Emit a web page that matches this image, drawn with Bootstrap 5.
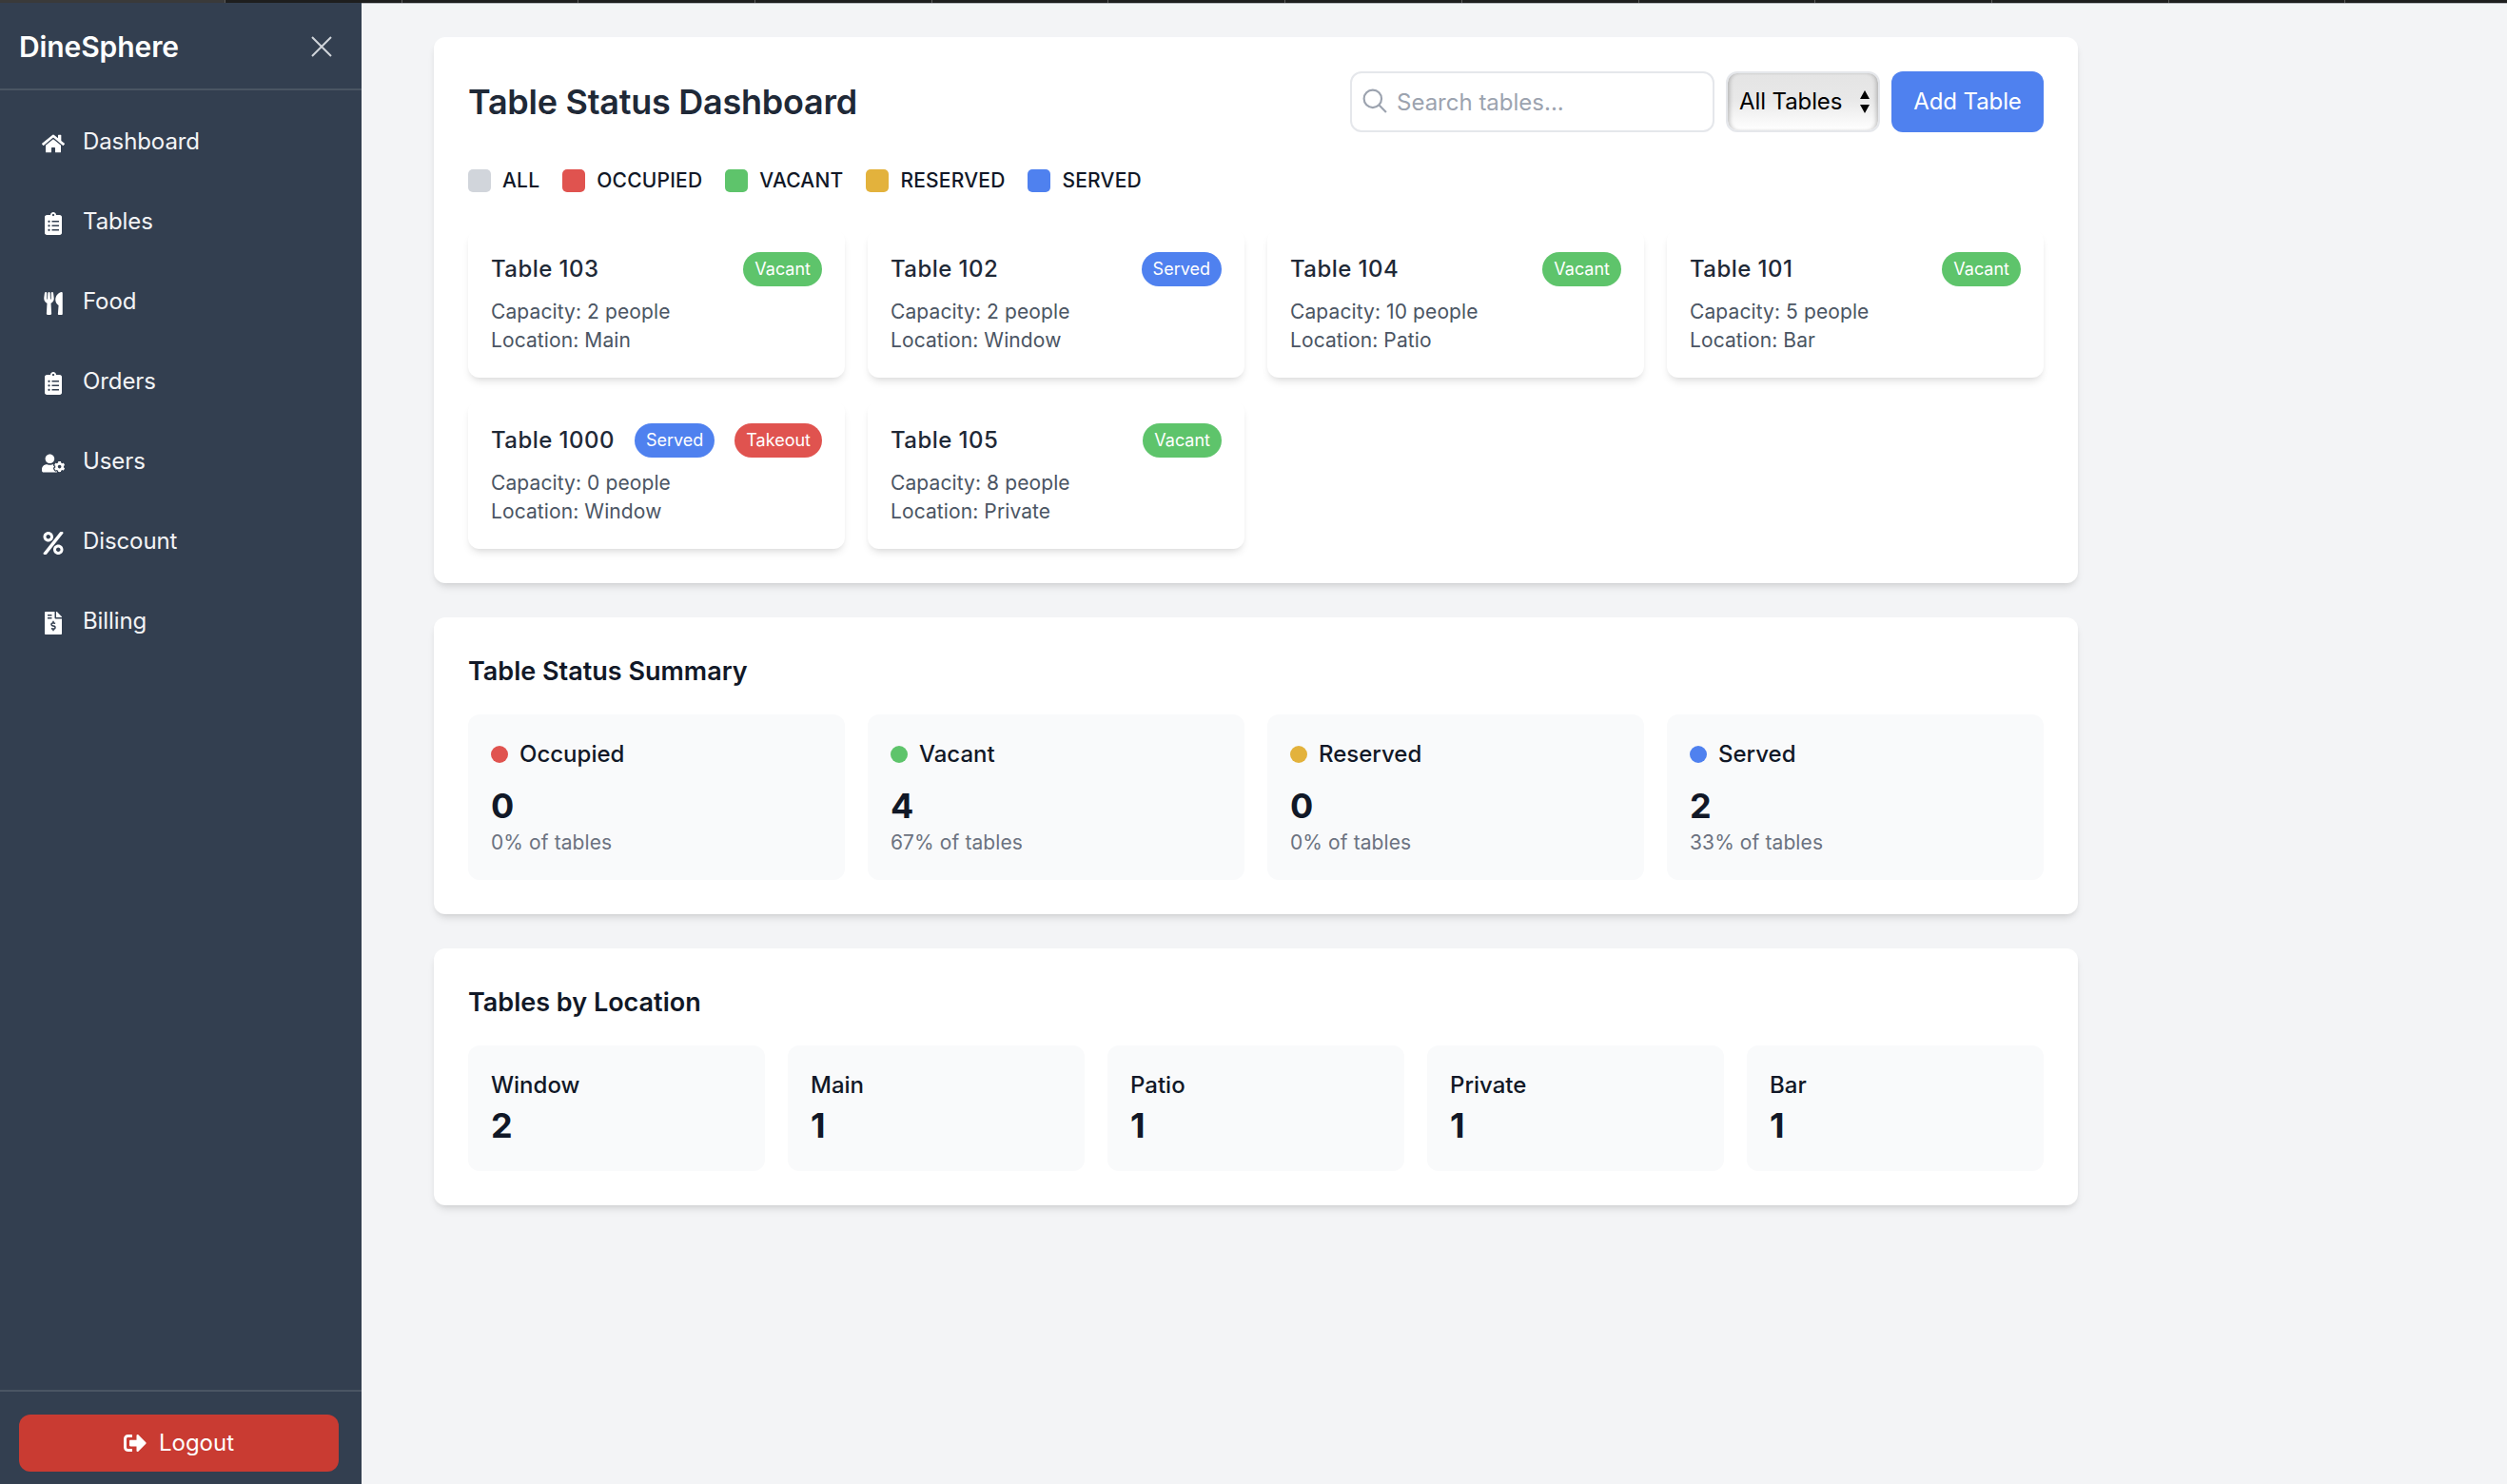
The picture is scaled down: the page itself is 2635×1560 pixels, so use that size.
<!DOCTYPE html>
<html lang="en">
<head>
    <meta charset="UTF-8">
    <title>DineSphere</title>
    <link href="https://cdn.jsdelivr.net/npm/bootstrap@5.3.0/dist/css/bootstrap.min.css" rel="stylesheet">
    <style>
        html, body { height: 100%; }
        body {
            font-family: Inter, "Liberation Sans", sans-serif;
            background: #f3f4f6;
            color: #1f2937;
            overflow: hidden;
        }
        .top-strip { height: 3px; background: #1e1e1e; overflow: hidden; }
        .top-strip span { width: 185.7px; flex: none; border-left: 1px solid #5a5a5a; }
        .top-strip span:first-child { width: 236px; background: #3a3a3a; border: 0; }
        .shell { height: 1557px; }

        .side-bar { width: 380px; background: #333f50; color: #fff; padding-top: 1px; }
        .side-head { height: 91px; padding: 0 31px 0 20px; border-bottom: 2px solid #4a5563; }
        .side-brand { font-size: 30px; font-weight: 600; line-height: 1; letter-spacing: -.1px; }
        .side-close { width: 22px; height: 22px; stroke: #d1d5db; stroke-width: 2; fill: none; }
        .side-menu { padding-top: 12px; }
        .side-link { height: 84px; padding-left: 44px; gap: 19px; color: #f3f4f6; font-size: 24px; letter-spacing: -.1px; text-decoration: none; }
        .side-link svg { width: 24px; height: 24px; fill: #fff; margin-top: 3px; flex: none; }
        .side-foot { border-top: 2px solid #4a5563; padding: 24px 24px 13px 20px; }
        .logout-btn { height: 60px; background: #c93b32; border: 0; color: #fff; font-size: 24px; gap: 13px; border-radius: 12px; }
        .logout-btn:hover { background: #c93b32; color: #fff; }
        .logout-btn svg { width: 24px; height: 24px; fill: #fff; }

        .main-area { padding: 35px 451px 0 76px; gap: 36px; border-top: 1px solid #b8bbc0; }
        .panel { background: #fff; border-radius: 12px; padding: 36px; box-shadow: 0 6px 9px -2px rgba(0,0,0,.1), 0 3px 6px -3px rgba(0,0,0,.1); }
        .panel-title { font-size: 36px; font-weight: 600; line-height: 54px; letter-spacing: -.25px; color: #1f2937; margin: 0; }
        .panel-sub { font-size: 27px; font-weight: 600; line-height: 42px; color: #111827; margin: 0 0 24px; }

        .ctrl-group { column-gap: 12px; }
        .search-box { width: 383px; height: 64px; }
        .search-box svg { left: 13px; top: 18px; width: 26px; height: 26px; stroke: #9ca3af; stroke-width: 2; fill: none; }
        .search-box input { height: 64px; border: 2px solid #e5e7eb; border-radius: 12px; padding: 0 12px 0 47px; font-size: 24px; }
        .search-box input::placeholder { color: #9ca3af; }
        .pick-box { width: 162px; height: 64px; }
        .pick-box select {
            appearance: none; width: 100%; height: 64px; padding: 0 0 0 12px; font-size: 24px; letter-spacing: -.1px; color: #000;
            border: 2px solid #e5e7eb; border-radius: 12px;
            background: linear-gradient(#e4e4e4 0%, #e8e8e8 45%, #ffffff 100%);
            box-shadow: inset 4px 0 4px -2px rgba(0,0,0,.22), inset -4px 0 4px -2px rgba(0,0,0,.22);
        }
        .pick-box svg { right: 10px; top: 20px; width: 12px; height: 24px; pointer-events: none; }
        .add-btn { width: 160px; height: 64px; background: #4f81ef; border: 0; border-radius: 12px; color: #fff; font-size: 24px; letter-spacing: -.1px; padding: 0; }
        .add-btn:hover { background: #4f81ef; color: #fff; }

        .legend-row { margin: 36px 0; gap: 24px; font-size: 21px; font-weight: 500; line-height: 30px; letter-spacing: .2px; color: #111827; text-transform: uppercase; }
        .legend-row > div { gap: 12px; }
        .swatch { width: 24px; height: 24px; border-radius: 5px; }
        .tone-all { background: #d1d5db; }
        .tone-occ { background: #e0534f; }
        .tone-vac { background: #5ec46b; }
        .tone-res { background: #e3b23c; }
        .tone-srv { background: #4f81ef; }

        .table-tile { background: #fff; border-radius: 12px; padding: 24px; height: 156px; box-shadow: 0 6px 9px -2px rgba(0,0,0,.1), 0 3px 6px -3px rgba(0,0,0,.08); }
        .tile-name { font-size: 24px; font-weight: 500; line-height: 36px; letter-spacing: .45px; color: #1f2937; }
        .tile-info { font-size: 21px; line-height: 30px; letter-spacing: .1px; color: #4b5563; margin-top: 12px; }
        .pill { height: 36px; padding: 0 12px; font-size: 18px; line-height: 36px; color: #fff; border-radius: 18px; }

        .stat-tile { background: #f9fafb; border-radius: 12px; padding: 24px; }
        .stat-label { font-size: 24px; font-weight: 500; line-height: 36px; color: #111827; gap: 12px; margin-bottom: 12px; }
        .stat-dot { width: 18px; height: 18px; border-radius: 50%; }
        .stat-num { font-size: 36px; font-weight: 700; line-height: 48px; color: #111827; }
        .stat-note { font-size: 21px; line-height: 30px; letter-spacing: .1px; color: #6b7280; }
        .place-name { font-size: 24px; font-weight: 500; line-height: 36px; color: #111827; }
    </style>
</head>
<body>
<div class="top-strip d-flex">
    <span></span><span></span><span></span><span></span><span></span><span></span><span></span><span></span><span></span><span></span><span></span><span></span><span></span><span></span>
</div>
<div class="shell d-flex">
    <!-- Sidebar -->
    <aside class="side-bar d-flex flex-column flex-shrink-0">
        <div class="side-head d-flex align-items-center justify-content-between">
            <span class="side-brand">DineSphere</span>
            <svg class="side-close" viewBox="0 0 22 22"><path d="M1 1l20 20M21 1L1 21"/></svg>
        </div>
        <nav class="side-menu flex-grow-1">
            <a class="side-link d-flex align-items-center" href="#"><svg viewBox="0 0 576 512"><path d="M280.37 148.26L96 300.11V464a16 16 0 0 0 16 16l112.06-.29a16 16 0 0 0 15.92-16V368a16 16 0 0 1 16-16h64a16 16 0 0 1 16 16v95.64a16 16 0 0 0 16 16.05L464 480a16 16 0 0 0 16-16V300L295.67 148.26a12.19 12.19 0 0 0-15.3 0zM571.6 251.47L488 182.56V44.05a12 12 0 0 0-12-12h-56a12 12 0 0 0-12 12v72.61L318.47 43a48 48 0 0 0-61 0L4.34 251.47a12 12 0 0 0-1.6 16.9l25.5 31A12 12 0 0 0 45.15 301l235.22-193.74a12.19 12.19 0 0 1 15.3 0L530.9 301a12 12 0 0 0 16.9-1.6l25.5-31a12 12 0 0 0-1.7-16.93z"/></svg>Dashboard</a>
            <a class="side-link d-flex align-items-center" href="#"><svg viewBox="0 0 384 512"><path d="M336 64h-80c0-35.3-28.7-64-64-64s-64 28.7-64 64H48C21.5 64 0 85.5 0 112v352c0 26.5 21.5 48 48 48h288c26.5 0 48-21.5 48-48V112c0-26.5-21.5-48-48-48zM96 424c-13.3 0-24-10.7-24-24s10.7-24 24-24 24 10.7 24 24-10.7 24-24 24zm0-96c-13.3 0-24-10.7-24-24s10.7-24 24-24 24 10.7 24 24-10.7 24-24 24zm0-96c-13.3 0-24-10.7-24-24s10.7-24 24-24 24 10.7 24 24-10.7 24-24 24zm96-192c13.3 0 24 10.7 24 24s-10.7 24-24 24-24-10.7-24-24 10.7-24 24-24zm128 368c0 4.4-3.6 8-8 8H168c-4.4 0-8-3.6-8-8v-16c0-4.4 3.6-8 8-8h144c4.4 0 8 3.6 8 8v16zm0-96c0 4.4-3.6 8-8 8H168c-4.4 0-8-3.6-8-8v-16c0-4.4 3.6-8 8-8h144c4.4 0 8 3.6 8 8v16zm0-96c0 4.4-3.6 8-8 8H168c-4.4 0-8-3.6-8-8v-16c0-4.4 3.6-8 8-8h144c4.4 0 8 3.6 8 8v16z"/></svg>Tables</a>
            <a class="side-link d-flex align-items-center" href="#"><svg viewBox="0 0 416 512"><path d="M207.9 15.2c.8 4.7 16.1 94.5 16.1 128.8 0 52.3-27.8 89.6-68.9 104.6L168 486.7c.7 13.7-10.2 25.3-24 25.3H80c-13.7 0-24.7-11.5-24-25.3l12.9-238.1C27.7 233.6 0 196.2 0 144 0 109.6 15.3 19.9 16.1 15.2 19.3-5.1 61.4-5.4 64 16.3v141.2c1.3 3.4 15.1 3.2 16 0 1.4-25.3 7.9-139.2 8-141.8 3.3-20.8 44.7-20.8 47.9 0 .2 2.7 6.6 116.5 8 141.8.9 3.2 14.8 3.4 16 0V16.3c2.6-21.6 44.8-21.4 48-1.1zm119.2 285.7l-15 185.1c-1.2 14 9.9 26 23.9 26h56c13.3 0 24-10.7 24-24V24c0-13.2-10.7-24-24-24-82.5 0-221.4 178.5-64.9 300.9z"/></svg>Food</a>
            <a class="side-link d-flex align-items-center" href="#"><svg viewBox="0 0 384 512"><path d="M336 64h-80c0-35.3-28.7-64-64-64s-64 28.7-64 64H48C21.5 64 0 85.5 0 112v352c0 26.5 21.5 48 48 48h288c26.5 0 48-21.5 48-48V112c0-26.5-21.5-48-48-48zM96 424c-13.3 0-24-10.7-24-24s10.7-24 24-24 24 10.7 24 24-10.7 24-24 24zm0-96c-13.3 0-24-10.7-24-24s10.7-24 24-24 24 10.7 24 24-10.7 24-24 24zm0-96c-13.3 0-24-10.7-24-24s10.7-24 24-24 24 10.7 24 24-10.7 24-24 24zm96-192c13.3 0 24 10.7 24 24s-10.7 24-24 24-24-10.7-24-24 10.7-24 24-24zm128 368c0 4.4-3.6 8-8 8H168c-4.4 0-8-3.6-8-8v-16c0-4.4 3.6-8 8-8h144c4.4 0 8 3.6 8 8v16zm0-96c0 4.4-3.6 8-8 8H168c-4.4 0-8-3.6-8-8v-16c0-4.4 3.6-8 8-8h144c4.4 0 8 3.6 8 8v16zm0-96c0 4.4-3.6 8-8 8H168c-4.4 0-8-3.6-8-8v-16c0-4.4 3.6-8 8-8h144c4.4 0 8 3.6 8 8v16z"/></svg>Orders</a>
            <a class="side-link d-flex align-items-center" href="#"><svg viewBox="0 0 640 512"><path d="M610.5 373.3c2.6-14.1 2.6-28.5 0-42.6l25.8-14.9c3-1.7 4.3-5.2 3.3-8.5-6.7-21.6-18.2-41.2-33.2-57.4-2.3-2.5-6-3.1-9-1.4l-25.8 14.9c-10.9-9.3-23.4-16.5-36.9-21.3v-29.8c0-3.4-2.4-6.4-5.7-7.1-22.3-5-45-4.8-66.2 0-3.3.7-5.7 3.7-5.7 7.1v29.8c-13.5 4.8-26 12-36.9 21.3l-25.8-14.9c-2.9-1.7-6.7-1.1-9 1.4-15 16.2-26.5 35.8-33.2 57.4-1 3.3.4 6.8 3.3 8.5l25.8 14.9c-2.6 14.1-2.6 28.5 0 42.6l-25.8 14.9c-3 1.7-4.3 5.2-3.3 8.5 6.7 21.6 18.2 41.1 33.2 57.4 2.3 2.5 6 3.1 9 1.4l25.8-14.9c10.9 9.3 23.4 16.5 36.9 21.3v29.8c0 3.4 2.4 6.4 5.7 7.1 22.3 5 45 4.8 66.2 0 3.3-.7 5.7-3.7 5.7-7.1v-29.8c13.5-4.8 26-12 36.9-21.3l25.8 14.9c2.9 1.7 6.7 1.1 9-1.4 15-16.2 26.5-35.8 33.2-57.4 1-3.3-.4-6.8-3.3-8.5l-25.8-14.9zM496 400.5c-26.8 0-48.5-21.8-48.5-48.5s21.8-48.5 48.5-48.5 48.5 21.8 48.5 48.5-21.7 48.5-48.5 48.5zM224 256c70.7 0 128-57.3 128-128S294.7 0 224 0 96 57.3 96 128s57.3 128 128 128zm201.2 226.5c-2.3-1.2-4.6-2.6-6.8-3.9l-7.9 4.6c-6 3.4-12.8 5.3-19.6 5.3-10.9 0-21.4-4.6-28.9-12.6-18.3-19.8-32.3-43.9-40.2-69.6-5.5-17.7 1.9-36.4 17.9-45.7l7.9-4.6c-.1-2.6-.1-5.2 0-7.8l-7.9-4.6c-16-9.2-23.4-28-17.9-45.7.9-2.9 2.2-5.8 3.2-8.7-3.8-.3-7.5-1.2-11.4-1.2h-16.7c-22.2 10.2-46.9 16-72.9 16s-50.6-5.8-72.9-16h-16.7C60.2 288 0 348.2 0 422.4V464c0 26.5 21.5 48 48 48h352c10.1 0 19.5-3.2 27.2-8.5-1.2-3.8-2-7.7-2-11.8v-9.2z"/></svg>Users</a>
            <a class="side-link d-flex align-items-center" href="#"><svg viewBox="0 0 448 512"><path d="M112 224c61.9 0 112-50.1 112-112S173.9 0 112 0 0 50.1 0 112s50.1 112 112 112zm0-160c26.5 0 48 21.5 48 48s-21.5 48-48 48-48-21.5-48-48 21.5-48 48-48zm224 224c-61.9 0-112 50.1-112 112s50.1 112 112 112 112-50.1 112-112-50.1-112-112-112zm0 160c-26.5 0-48-21.5-48-48s21.5-48 48-48 48 21.5 48 48-21.5 48-48 48zM392.3.2l31.6.1c19.4.1 30.9 21.8 19.9 37.8L77.4 501.6a23.95 23.95 0 0 1-19.8 10.4l-33.4-.1c-19.5 0-30.9-21.9-19.7-37.8l368-463.7C377.2 4 384.5.2 392.3.2z"/></svg>Discount</a>
            <a class="side-link d-flex align-items-center" href="#"><svg viewBox="0 0 384 512"><path d="M377 105L279.1 7c-4.5-4.5-10.6-7-17-7H256v128h128v-6.1c0-6.3-2.5-12.4-7-16.9zm-153 31V0H24C10.7 0 0 10.7 0 24v464c0 13.3 10.7 24 24 24h336c13.3 0 24-10.7 24-24V160H248c-13.2 0-24-10.8-24-24zM64 72c0-4.42 3.58-8 8-8h80c4.42 0 8 3.58 8 8v16c0 4.42-3.58 8-8 8H72c-4.42 0-8-3.58-8-8V72zm0 64c0-4.42 3.58-8 8-8h80c4.42 0 8 3.58 8 8v16c0 4.42-3.58 8-8 8H72c-4.42 0-8-3.58-8-8v-16zm144 263.88V424c0 4.42-3.58 8-8 8h-16c-4.42 0-8-3.58-8-8v-24.29c-11.29-.58-22.27-4.52-31.37-11.35-3.9-2.93-4.1-8.77-.57-12.14l11.75-11.21c2.77-2.64 6.89-2.76 10.13-.73 3.87 2.42 8.26 3.72 12.82 3.72h28.11c6.5 0 11.8-5.92 11.8-13.19 0-5.95-3.61-11.19-8.77-12.73l-45-13.5c-18.59-5.58-31.58-23.42-31.58-43.39 0-24.52 19.05-44.44 42.67-45.07V216c0-4.42 3.58-8 8-8h16c4.42 0 8 3.58 8 8v24.29c11.29.58 22.27 4.51 31.37 11.35 3.9 2.93 4.1 8.77.57 12.14l-11.75 11.21c-2.77 2.64-6.89 2.76-10.13.73-3.87-2.43-8.26-3.72-12.82-3.72h-28.11c-6.5 0-11.8 5.92-11.8 13.19 0 5.95 3.61 11.19 8.77 12.73l45 13.5c18.59 5.58 31.58 23.42 31.58 43.39 0 24.53-19.05 44.44-42.67 45.07z"/></svg>Billing</a>
        </nav>
        <div class="side-foot">
            <button class="btn logout-btn w-100 d-flex align-items-center justify-content-center"><svg viewBox="0 0 512 512"><path d="M497 273L329 441c-15 15-41 4.5-41-17v-96H152c-13.3 0-24-10.7-24-24v-96c0-13.3 10.7-24 24-24h136V88c0-21.4 25.9-32 41-17l168 168c9.3 9.4 9.3 24.6 0 34zM192 436v-40c0-6.6-5.4-12-12-12H96c-17.7 0-32-14.3-32-32V160c0-17.7 14.3-32 32-32h84c6.6 0 12-5.4 12-12V76c0-6.6-5.4-12-12-12H96c-53 0-96 43-96 96v192c0 53 43 96 96 96h84c6.6 0 12-5.4 12-12z"/></svg>Logout</button>
        </div>
    </aside>

    <main class="main-area flex-grow-1 d-flex flex-column">
        <!-- Table grid -->
        <section class="panel">
            <div class="d-flex align-items-center justify-content-between">
                <h2 class="panel-title">Table Status Dashboard</h2>
                <div class="ctrl-group d-flex">
                    <div class="search-box position-relative">
                        <svg class="position-absolute" viewBox="0 0 24 24"><circle cx="10" cy="10" r="8.5"/><path d="M16.2 16.2l6.8 6.8"/></svg>
                        <input class="form-control" type="text" placeholder="Search tables...">
                    </div>
                    <div class="pick-box position-relative">
                        <select><option>All Tables</option></select>
                        <svg class="position-absolute" viewBox="0 0 12 24"><path d="M6 0l5 9H1zM6 24l5-9H1z"/></svg>
                    </div>
                    <button class="btn add-btn">Add Table</button>
                </div>
            </div>
            <div class="legend-row d-flex">
                <div class="d-flex align-items-center"><span class="swatch tone-all"></span>All</div>
                <div class="d-flex align-items-center"><span class="swatch tone-occ"></span>Occupied</div>
                <div class="d-flex align-items-center"><span class="swatch tone-vac"></span>Vacant</div>
                <div class="d-flex align-items-center"><span class="swatch tone-res"></span>Reserved</div>
                <div class="d-flex align-items-center"><span class="swatch tone-srv"></span>Served</div>
            </div>
            <div class="row row-cols-4 g-4">
                <div class="col"><div class="table-tile">
                    <div class="d-flex justify-content-between"><span class="tile-name">Table 103</span><span class="pill tone-vac">Vacant</span></div>
                    <div class="tile-info">Capacity: 2 people<br>Location: Main</div>
                </div></div>
                <div class="col"><div class="table-tile">
                    <div class="d-flex justify-content-between"><span class="tile-name">Table 102</span><span class="pill tone-srv">Served</span></div>
                    <div class="tile-info">Capacity: 2 people<br>Location: Window</div>
                </div></div>
                <div class="col"><div class="table-tile">
                    <div class="d-flex justify-content-between"><span class="tile-name">Table 104</span><span class="pill tone-vac">Vacant</span></div>
                    <div class="tile-info">Capacity: 10 people<br>Location: Patio</div>
                </div></div>
                <div class="col"><div class="table-tile">
                    <div class="d-flex justify-content-between"><span class="tile-name">Table 101</span><span class="pill tone-vac">Vacant</span></div>
                    <div class="tile-info">Capacity: 5 people<br>Location: Bar</div>
                </div></div>
                <div class="col"><div class="table-tile">
                    <div class="d-flex justify-content-between"><span class="tile-name">Table 1000</span><span class="pill tone-srv">Served</span><span class="pill tone-occ">Takeout</span></div>
                    <div class="tile-info">Capacity: 0 people<br>Location: Window</div>
                </div></div>
                <div class="col"><div class="table-tile">
                    <div class="d-flex justify-content-between"><span class="tile-name">Table 105</span><span class="pill tone-vac">Vacant</span></div>
                    <div class="tile-info">Capacity: 8 people<br>Location: Private</div>
                </div></div>
            </div>
        </section>

        <!-- Summary -->
        <section class="panel">
            <h3 class="panel-sub">Table Status Summary</h3>
            <div class="row row-cols-4 g-4">
                <div class="col"><div class="stat-tile">
                    <div class="stat-label d-flex align-items-center"><span class="stat-dot tone-occ"></span>Occupied</div>
                    <div class="stat-num">0</div>
                    <div class="stat-note">0% of tables</div>
                </div></div>
                <div class="col"><div class="stat-tile">
                    <div class="stat-label d-flex align-items-center"><span class="stat-dot tone-vac"></span>Vacant</div>
                    <div class="stat-num">4</div>
                    <div class="stat-note">67% of tables</div>
                </div></div>
                <div class="col"><div class="stat-tile">
                    <div class="stat-label d-flex align-items-center"><span class="stat-dot tone-res"></span>Reserved</div>
                    <div class="stat-num">0</div>
                    <div class="stat-note">0% of tables</div>
                </div></div>
                <div class="col"><div class="stat-tile">
                    <div class="stat-label d-flex align-items-center"><span class="stat-dot tone-srv"></span>Served</div>
                    <div class="stat-num">2</div>
                    <div class="stat-note">33% of tables</div>
                </div></div>
            </div>
        </section>

        <!-- Locations -->
        <section class="panel">
            <h3 class="panel-sub">Tables by Location</h3>
            <div class="row row-cols-5 g-4">
                <div class="col"><div class="stat-tile"><div class="place-name">Window</div><div class="stat-num">2</div></div></div>
                <div class="col"><div class="stat-tile"><div class="place-name">Main</div><div class="stat-num">1</div></div></div>
                <div class="col"><div class="stat-tile"><div class="place-name">Patio</div><div class="stat-num">1</div></div></div>
                <div class="col"><div class="stat-tile"><div class="place-name">Private</div><div class="stat-num">1</div></div></div>
                <div class="col"><div class="stat-tile"><div class="place-name">Bar</div><div class="stat-num">1</div></div></div>
            </div>
        </section>
    </main>
</div>
<script src="https://cdn.jsdelivr.net/npm/bootstrap@5.3.0/dist/js/bootstrap.bundle.min.js"></script>
</body>
</html>
